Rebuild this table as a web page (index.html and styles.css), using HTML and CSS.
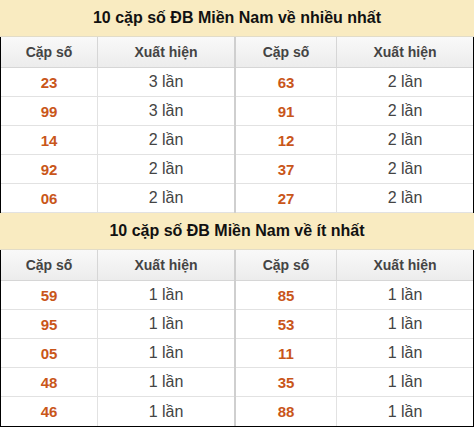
FILE: index.html
```html
<!DOCTYPE html>
<html lang="vi">
<head>
<meta charset="utf-8">
<link rel="stylesheet" href="styles.css">
</head>
<body>
<div class="box">
  <div class="title">10 cặp số ĐB Miền Nam về nhiều nhất</div>
  <div class="tables">
    <div class="half left">
      <div class="th">Cặp số</div><div class="th">Xuất hiện</div>
      <div class="num">23</div><div class="cnt">3 lần</div>
      <div class="num">99</div><div class="cnt">3 lần</div>
      <div class="num">14</div><div class="cnt">2 lần</div>
      <div class="num">92</div><div class="cnt">2 lần</div>
      <div class="num">06</div><div class="cnt">2 lần</div>
    </div>
    <div class="half right">
      <div class="th">Cặp số</div><div class="th">Xuất hiện</div>
      <div class="num">63</div><div class="cnt">2 lần</div>
      <div class="num">91</div><div class="cnt">2 lần</div>
      <div class="num">12</div><div class="cnt">2 lần</div>
      <div class="num">37</div><div class="cnt">2 lần</div>
      <div class="num">27</div><div class="cnt">2 lần</div>
    </div>
  </div>
  <div class="title">10 cặp số ĐB Miền Nam về ít nhất</div>
  <div class="tables last">
    <div class="half left">
      <div class="th">Cặp số</div><div class="th">Xuất hiện</div>
      <div class="num">59</div><div class="cnt">1 lần</div>
      <div class="num">95</div><div class="cnt">1 lần</div>
      <div class="num">05</div><div class="cnt">1 lần</div>
      <div class="num">48</div><div class="cnt">1 lần</div>
      <div class="num">46</div><div class="cnt">1 lần</div>
    </div>
    <div class="half right">
      <div class="th">Cặp số</div><div class="th">Xuất hiện</div>
      <div class="num">85</div><div class="cnt">1 lần</div>
      <div class="num">53</div><div class="cnt">1 lần</div>
      <div class="num">11</div><div class="cnt">1 lần</div>
      <div class="num">35</div><div class="cnt">1 lần</div>
      <div class="num">88</div><div class="cnt">1 lần</div>
    </div>
  </div>
</div>
</body>
</html>
```

FILE: styles.css
```css
html, body {
  margin: 0;
  padding: 0;
  background: #fff;
}
body {
  font-family: "Liberation Sans", Arial, sans-serif;
}
.box {
  width: 474px;
  height: 427px;
  box-sizing: border-box;
  border-bottom: 1px solid #000;
}
.title {
  height: 36px;
  border-bottom: 1px solid #e2dcc8;
  background: #f9ebc1;
  color: #111;
  font-weight: bold;
  font-size: 16px;
  display: flex;
  align-items: center;
  justify-content: center;
}
.tables {
  display: grid;
  grid-template-columns: 236px 238px;
}
.half {
  display: grid;
  grid-auto-rows: 29px;
}
.half > div {
  display: flex;
  align-items: center;
  justify-content: center;
  border-bottom: 1px solid #e2e2e2;
  box-sizing: border-box;
}
.left {
  grid-template-columns: 97px 1fr;
  border-left: 1px solid #000;
  border-right: 2px solid #cfcfcf;
}
.right {
  grid-template-columns: 101px 1fr;
  border-right: 1px solid #000;
}
.half > div:nth-child(odd) {
  border-right: 1px solid #e2e2e2;
}
.half > .th {
  height: 31px;
  background: linear-gradient(#f9f9f9, #ececec);
  color: #444;
  font-weight: bold;
  font-size: 14px;
  border-bottom: 1px solid #d6d6d6;
}
.half > .th:nth-child(1) {
  border-right-color: #d6d6d6;
}
.tables {
  grid-template-rows: auto;
}
.half {
  grid-template-rows: 31px repeat(5, 29px);
}
.num {
  color: #c9561a;
  font-weight: bold;
  font-size: 15px;
}
.cnt {
  color: #444;
  font-size: 16px;
}
.last .half > div:nth-last-child(-n+2) {
  border-bottom: none;
}
```
